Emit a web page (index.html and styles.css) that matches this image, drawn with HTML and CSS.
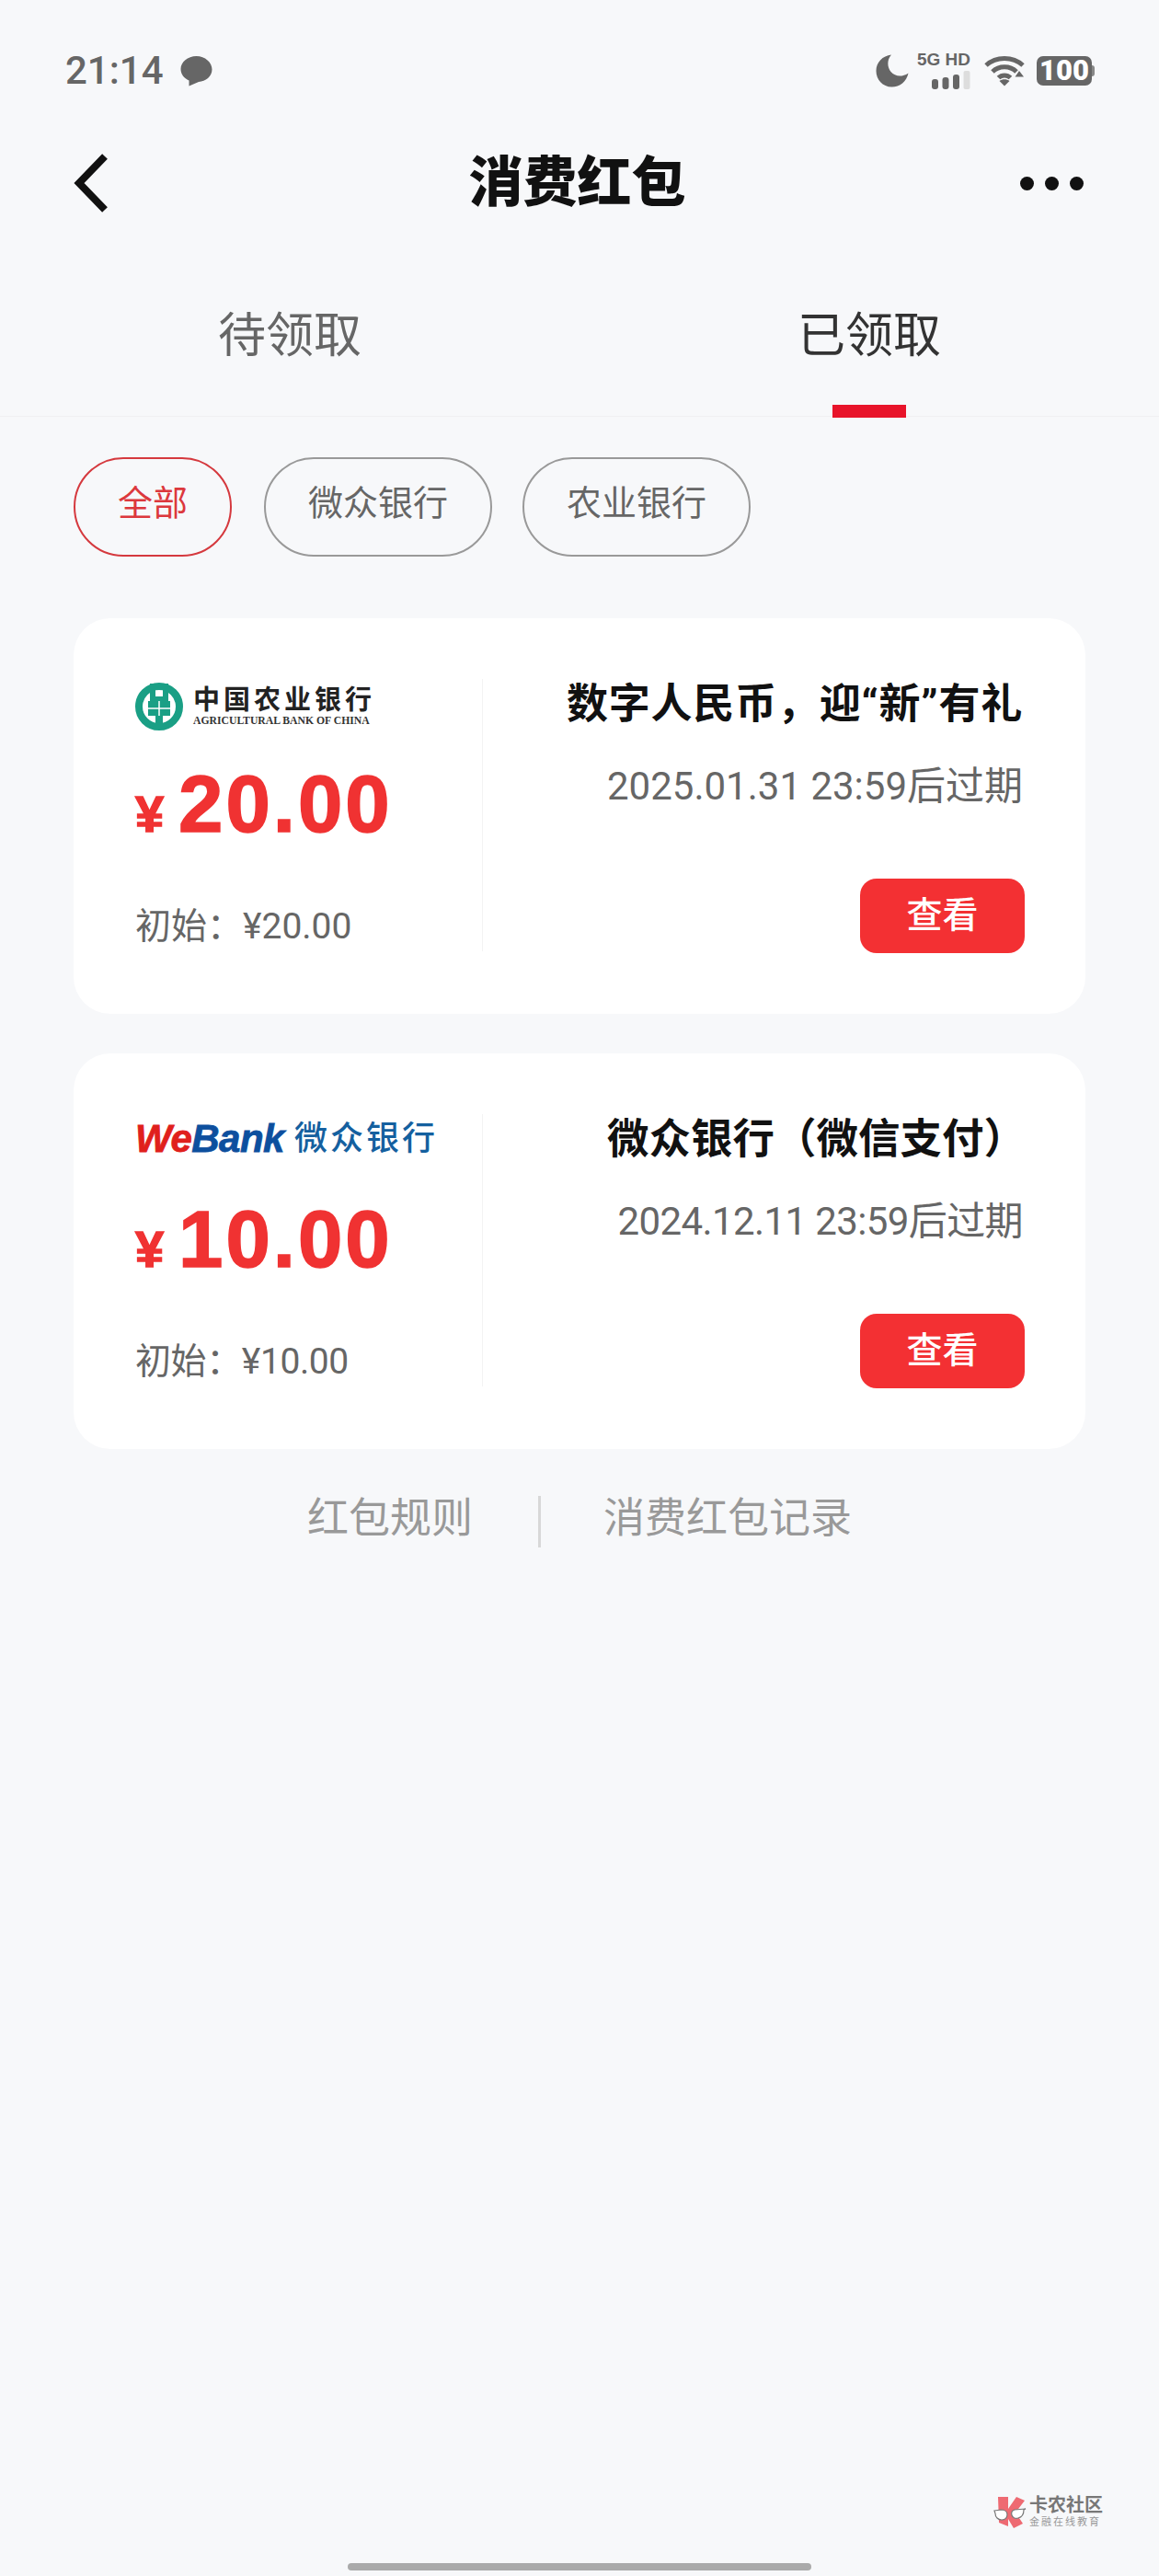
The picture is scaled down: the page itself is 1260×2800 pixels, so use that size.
FILE: index.html
```html
<!doctype html>
<html lang="zh-CN">
<head>
  <meta charset="UTF-8">
  <title>消费红包</title>
  <link rel="stylesheet" href="styles.css">
</head>
<body>
<div id="app">
  <div class="status">
    <div class="status-left">
      <span class="status-time">21:14</span>
      <svg class="status-msg" width="37" height="34" viewBox="0 0 37 34"><path d="M18.500 1C28 1 35.500 8 35.500 15.500C35.500 23 28.500 28.500 21 29L10.500 33.500L10.500 27.500C5 25 1.500 20.500 1.500 15C1.500 7.500 9 1 18.500 1Z" fill="#666"/></svg>
    </div>
    <div class="status-right">
      <svg class="status-moon" width="36" height="36" viewBox="0 0 36 36"><path d="M17 0.500C12 6 12.500 14 16.500 19C21 24 28 25.500 35.500 20.500C33.500 29.500 26.500 35.500 17.500 35.500C7.500 35.500 0.500 27.500 0.500 18C0.500 9 7.500 1.500 17 0.500Z" fill="#666"/></svg>
      <div class="status-net">
        <span class="status-net-text">5G HD</span>
        <svg width="42" height="20" viewBox="0 0 42 20">
          <rect x="0" y="9" width="7" height="11" rx="3" fill="#666"/>
          <rect x="11.500" y="7" width="7" height="13" rx="3" fill="#666"/>
          <rect x="23" y="4" width="7" height="16" rx="3" fill="#666"/>
          <rect x="34.500" y="0" width="7" height="20" rx="2" fill="#ddd"/>
        </svg>
      </div>
      <svg class="status-wifi" width="44" height="34" viewBox="0 0 44 34" fill="none" stroke="#666" stroke-width="5">
        <path d="M2 11C13 1 31 1 42 11"/>
        <path d="M9 18C16 11 28 11 35 18"/>
        <path d="M15.500 24.500C19 21 25 21 28.500 24.500"/>
        <path d="M22 33.500L16.500 28C19.500 25.500 24.500 25.500 27.500 28Z" fill="#666" stroke="none"/>
        <path d="M33.500 23.500L38 17L43 23.500Z" fill="#666" stroke="none"/>
      </svg>
      <div class="status-batt">
        <span class="status-batt-body">100</span>
        <span class="status-batt-nub"></span>
      </div>
    </div>
  </div>

  <div class="header">
    <svg class="header-back" width="38" height="64" viewBox="0 0 38 64" fill="none"><path d="M34 3L6 32L34 61" stroke="#111" stroke-width="8"/></svg>
    <h1 class="header-title">消费红包</h1>
    <div class="header-more"><i></i><i></i><i></i></div>
  </div>

  <div class="tabs">
    <div class="tab">待领取</div>
    <div class="tab tab-on">已领取</div>
  </div>

  <div class="chips">
    <div class="chip chip-on">全部</div>
    <div class="chip">微众银行</div>
    <div class="chip">农业银行</div>
  </div>

  <div class="card">
    <div class="card-left">
      <div class="logo">
        <svg class="abc-mark" width="52" height="52" viewBox="0 0 52 52">
          <circle cx="26" cy="26" r="22" fill="#fff" stroke="#1a9f85" stroke-width="8"/>
          <path d="M16 1H22V15H30V1H36V20H38V36H30V51H22V36H14V20H16Z" fill="#1a9f85"/>
          <path d="M14 28H38M26 20V36" stroke="#fff" stroke-width="1.500"/>
        </svg>
        <div class="abc-text">
          <div class="abc-cn">中国农业银行</div>
          <div class="abc-en">AGRICULTURAL BANK OF CHINA</div>
        </div>
      </div>
      <div class="amount"><span class="amount-sign">¥</span><span class="amount-num">20.00</span></div>
      <div class="origin">初始：¥20.00</div>
    </div>
    <div class="card-right">
      <div class="card-title card-title-wide">数字人民币，迎“新”有礼</div>
      <div class="card-date">2025.01.31 23:59后过期</div>
      <div class="btn">查看</div>
    </div>
  </div>

  <div class="card">
    <div class="card-left">
      <div class="logo logo-wb">
        <span class="wb-en"><b>We</b>Bank</span>
        <span class="wb-cn">微众银行</span>
      </div>
      <div class="amount"><span class="amount-sign">¥</span><span class="amount-num">10.00</span></div>
      <div class="origin origin-tight">初始：¥10.00</div>
    </div>
    <div class="card-right">
      <div class="card-title card-title-paren">微众银行（微信支付）</div>
      <div class="card-date card-date-tight">2024.12.11 23:59后过期</div>
      <div class="btn">查看</div>
    </div>
  </div>

  <div class="links">
    <span class="link">红包规则</span>
    <span class="link-sep"></span>
    <span class="link">消费红包记录</span>
  </div>

  <div class="home-bar"></div>

  <div class="mark">
    <svg width="36" height="36" viewBox="0 0 36 36">
      <path d="M5 1H16V14L25 1L34 5L24 18L32 30L22 35L16 25V33L6 29Z" fill="#ee6a72"/>
      <path d="M1 16L8 15C12 15 15 17 15 20C15 24 12 26 9 26C5 26 2 23 2 19Z" fill="#fff" stroke="#777" stroke-width="1.200"/>
      <path d="M35 14L23 15C20 16 19 18 20 21C21 24 24 25 27 24C31 23 33 19 33 15Z" fill="#fff" stroke="#777" stroke-width="1.200"/>
    </svg>
    <div class="mark-text">
      <div class="mark-title">卡农社区</div>
      <div class="mark-sub">金融在线教育</div>
    </div>
  </div>
</div>
</body>
</html>
```

FILE: styles.css
```css
* {
  margin: 0;
  padding: 0;
  box-sizing: border-box;
}
html, body {
  height: 100%;
  width: 100%;
}
body {
  background: #f7f8fa;
  font-family: Roboto, "Noto Sans CJK SC", sans-serif;
  color: #666;
}
#app {
  position: relative;
  width: 1260px;
  height: 2800px;
  display: flex;
  flex-direction: column;
}

.status {
  height: 154px;
  padding: 0 70px 0 71px;
  display: flex;
  align-items: center;
  justify-content: space-between;
}
.status-left {
  display: flex;
  align-items: center;
  gap: 17px;
}
.status-time {
  font-size: 42px;
  font-weight: 500;
  line-height: 50px;
  color: #666;
}
.status-right {
  display: flex;
  align-items: center;
}
.status-moon {
  margin-left: 2px;
}
.status-net {
  margin-left: 9px;
  width: 58px;
  display: flex;
  flex-direction: column;
  align-items: flex-end;
  gap: 4px;
}
.status-net-text {
  font-family: "Liberation Sans", sans-serif;
  font-size: 19px;
  font-weight: 700;
  line-height: 16px;
  white-space: nowrap;
}
.status-wifi {
  margin-left: 15px;
}
.status-batt {
  margin-left: 13px;
  display: flex;
  align-items: center;
}
.status-batt-body {
  width: 60px;
  height: 32px;
  border-radius: 7px;
  background: #666;
  color: #fff;
  font-size: 31px;
  font-weight: 900;
  line-height: 32px;
  text-align: center;
}
.status-batt-nub {
  width: 3px;
  height: 12px;
  border-radius: 0 3px 3px 0;
  background: #888;
}

.header {
  height: 90px;
  padding: 0 82px 0 80px;
  display: grid;
  grid-template-columns: 1fr auto 1fr;
  align-items: center;
}
.header-title {
  margin-right: 3px;
  font-size: 59px;
  font-weight: 900;
  line-height: 90px;
  color: #111;
}
.header-more {
  display: flex;
  gap: 12px;
  justify-content: flex-end;
}
.header-more i {
  flex: none;
  width: 15px;
  height: 15px;
  border-radius: 50%;
  background: #111;
}

.tabs {
  margin-top: 70px;
  height: 139px;
  display: flex;
  border-bottom: 1px solid #f0f0f2;
}
.tab {
  position: relative;
  flex: 1;
  text-align: center;
  font-size: 52px;
  line-height: 104px;
  color: #666;
}
.tab-on {
  color: #333;
}
.tab-on::after {
  content: "";
  position: absolute;
  left: 50%;
  bottom: -2px;
  width: 80px;
  height: 14px;
  margin-left: -40px;
  background: #e8142a;
}

.chips {
  margin-top: 44px;
  padding: 0 80px;
  display: flex;
  gap: 33px;
}
.chip {
  height: 108px;
  padding: 0 46px;
  border: 2px solid #999;
  border-radius: 54px;
  font-size: 38px;
  line-height: 96px;
  color: #666;
}
.chip-on {
  margin-right: 2px;
  border-color: #d5393e;
  color: #dc383d;
}

.card {
  margin: 67px 80px 0;
  height: 430px;
  padding: 66px 0 68px;
  border-radius: 40px;
  background: #fff;
  display: flex;
}
.card + .card {
  margin-top: 43px;
}
.card-left {
  width: 445px;
  padding-left: 67px;
  border-right: 1px solid #f3f3f3;
}
.card-right {
  flex: 1;
  padding-right: 68px;
  display: flex;
  flex-direction: column;
  align-items: flex-end;
}

.logo {
  height: 60px;
  display: flex;
  align-items: center;
}
.logo-wb {
  padding-bottom: 6px;
}
.abc-mark {
  flex: none;
}
.abc-text {
  margin-left: 11px;
  width: 194px;
}
.abc-cn {
  font-size: 29px;
  font-weight: 700;
  line-height: 32px;
  letter-spacing: 4px;
  color: #222;
  white-space: nowrap;
}
.abc-en {
  font-family: "Liberation Serif", serif;
  font-size: 11.700px;
  font-weight: 700;
  line-height: 14px;
  color: #333;
  white-space: nowrap;
}
.wb-en {
  font-family: "Liberation Sans", sans-serif;
  font-size: 42px;
  font-style: italic;
  font-weight: 700;
  letter-spacing: -0.500px;
  -webkit-text-stroke: 0.800px currentColor;
  color: #0d4f9e;
}
.wb-en b {
  color: #e0201c;
}
.wb-cn {
  margin-left: 11px;
  font-size: 36px;
  font-weight: 500;
  line-height: 40px;
  letter-spacing: 3px;
  color: #14609f;
  white-space: nowrap;
}

.amount {
  margin-top: 34px;
  height: 84px;
  display: flex;
  align-items: baseline;
  color: #f03232;
  font-family: "Liberation Sans", sans-serif;
  font-weight: 700;
  line-height: 84px;
}
.amount-sign {
  width: 47px;
  font-size: 56px;
  -webkit-text-stroke: 1.500px currentColor;
}
.amount-num {
  font-size: 87px;
  letter-spacing: 3px;
  -webkit-text-stroke: 1.500px currentColor;
}
.origin {
  margin-top: 66px;
  font-size: 39px;
  line-height: 50px;
  color: #666;
}
.origin-tight {
  letter-spacing: -0.400px;
}

.card-title {
  font-weight: 700;
  line-height: 56px;
  color: #111;
  white-space: nowrap;
}
.card-title-wide {
  font-size: 45px;
  letter-spacing: 0.800px;
}
.card-title-paren {
  margin-right: -3px;
  font-size: 45.500px;
}
.card-date {
  margin-top: 36px;
  font-size: 42px;
  line-height: 50px;
  color: #666;
  white-space: nowrap;
}
.card-date-tight {
  letter-spacing: -0.600px;
}
.btn {
  margin: 75px -2px 0 0;
  width: 179px;
  height: 81px;
  border-radius: 18px;
  background: #f33033;
  color: #fff;
  font-size: 39px;
  font-weight: 500;
  line-height: 81px;
  text-align: center;
}

.links {
  margin-top: 45px;
  display: flex;
  align-items: center;
  justify-content: center;
  color: #999;
  font-size: 45px;
  line-height: 58px;
}
.link-sep {
  width: 3px;
  height: 56px;
  margin: 6px 68px 0 71px;
  background: #d8d8d8;
}

.home-bar {
  margin: auto auto 6px;
  width: 504px;
  height: 8px;
  border-radius: 4px;
  background: #aaa;
}

.mark {
  position: absolute;
  left: 1080px;
  top: 2713px;
  display: flex;
  gap: 3px;
}
.mark-title {
  font-size: 20px;
  font-weight: 700;
  line-height: 21px;
  color: #777;
  white-space: nowrap;
}
.mark-sub {
  margin-top: 1px;
  font-size: 11px;
  line-height: 13px;
  letter-spacing: 2px;
  color: #999;
  white-space: nowrap;
}
```
